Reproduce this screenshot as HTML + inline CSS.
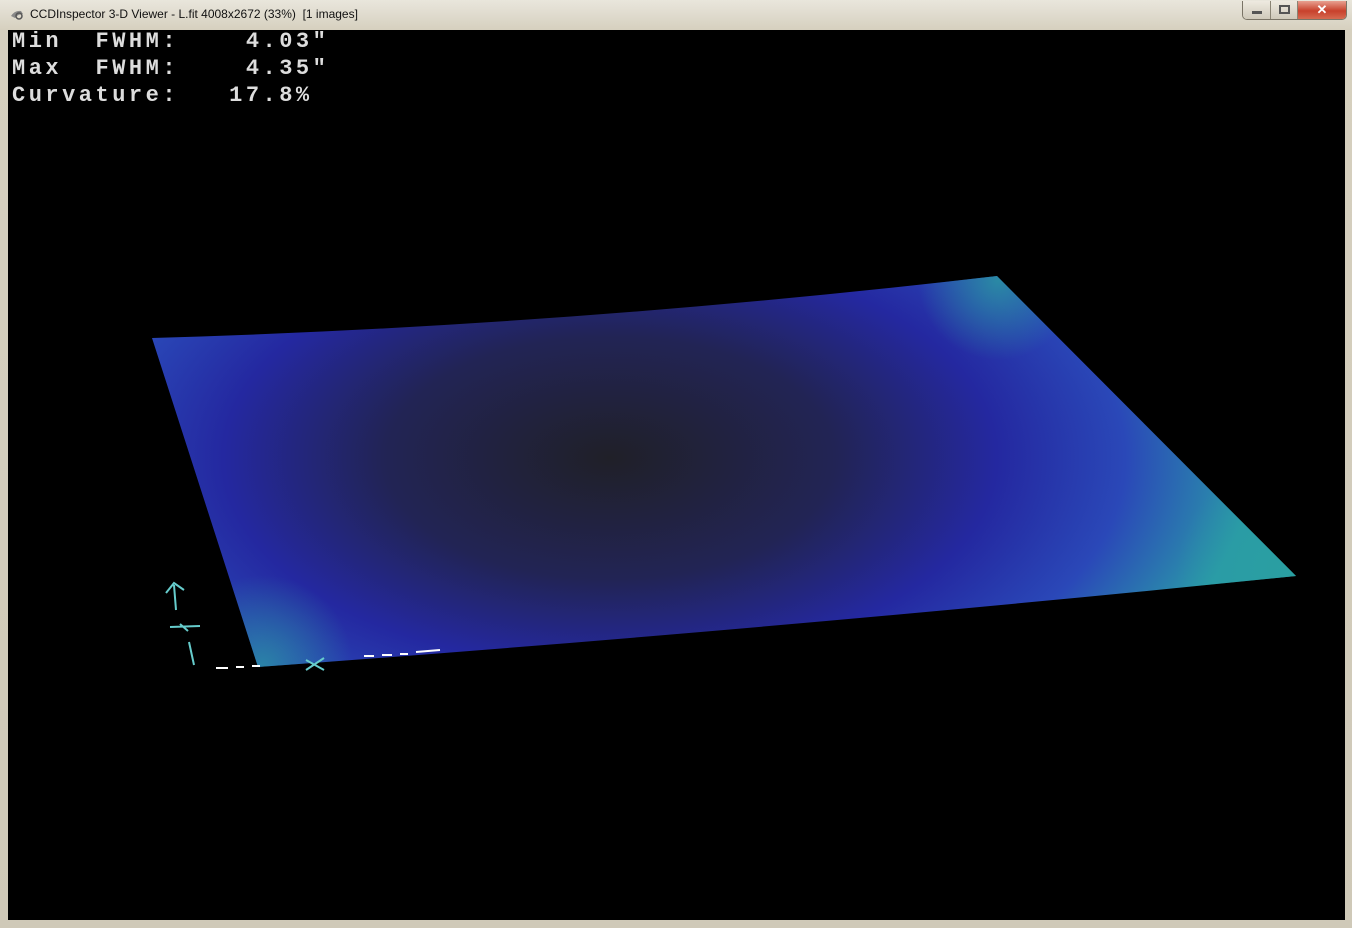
<!DOCTYPE html>
<html><head><style>
html,body{margin:0;padding:0;width:1352px;height:928px;overflow:hidden;background:#d9d4c4;}
.win{position:absolute;left:0;top:0;width:1352px;height:928px;background:linear-gradient(#e9e6dc,#d6d0bf 30px,#cfc9b8);}
.title{position:absolute;left:30px;top:7px;font:12px "Liberation Sans",sans-serif;color:#111;}
.client{position:absolute;left:8px;top:30px;width:1337px;height:890px;background:#000;overflow:hidden;}
.txt{position:absolute;left:4px;font:bold 22px "Liberation Mono",monospace;color:#ddd;letter-spacing:3.5px;white-space:pre;line-height:24px;}
.btns{position:absolute;left:1242px;top:1px;height:18px;width:103px;border:1px solid #7a7466;border-top:none;border-radius:0 0 5px 5px;overflow:hidden;display:flex;}
.btns div{height:18px;}
</style></head><body>
<div class="win">
<svg style="position:absolute;left:9px;top:8px" width="16" height="14"><path d="M2 8 Q6 2 12 3 L14 6 Q9 6 6 10 Z" fill="#888"/><circle cx="10" cy="8" r="3" fill="none" stroke="#555" stroke-width="1.5"/></svg>
<div class="title">CCDInspector 3-D Viewer - L.fit 4008x2672 (33%)&nbsp; [1 images]</div>
<div class="btns">
<div style="width:27px;background:linear-gradient(#eeeae0,#cfc9ba);border-right:1px solid #8a8474;position:relative"><span style="position:absolute;left:9px;top:10px;width:10px;height:3px;background:#555"></span></div>
<div style="width:26px;background:linear-gradient(#eeeae0,#cfc9ba);border-right:1px solid #8a8474;position:relative"><span style="position:absolute;left:8px;top:4px;width:7px;height:5px;border:2px solid #555"></span></div>
<div style="flex:1;background:linear-gradient(#e8a090,#c8412c 55%,#d66a50);color:#fff;font:bold 13px 'Liberation Sans',sans-serif;text-align:center;line-height:18px">✕</div>
</div>
<div class="client">
<svg width="1337" height="890" style="position:absolute;left:0;top:0">
<defs>
<radialGradient id="g" gradientUnits="userSpaceOnUse" cx="602" cy="428" r="560" gradientTransform="translate(602 428) scale(1.15 0.62) translate(-602 -428)">
<stop offset="0" stop-color="#202028"/>
<stop offset="0.35" stop-color="#222455"/>
<stop offset="0.6" stop-color="#2428a0"/>
<stop offset="0.8" stop-color="#2a48b8"/>
<stop offset="1" stop-color="#2a9aa8"/>
</radialGradient>
<radialGradient id="t1" gradientUnits="userSpaceOnUse" cx="1288" cy="546" r="120"><stop offset="0" stop-color="#2aa0a0" stop-opacity=".9"/><stop offset="1" stop-color="#2aa0a0" stop-opacity="0"/></radialGradient>
<radialGradient id="t2" gradientUnits="userSpaceOnUse" cx="990" cy="250" r="80"><stop offset="0" stop-color="#2a9aa0" stop-opacity=".8"/><stop offset="1" stop-color="#2a9aa0" stop-opacity="0"/></radialGradient>
<radialGradient id="t3" gradientUnits="userSpaceOnUse" cx="255" cy="635" r="90"><stop offset="0" stop-color="#2a9aa0" stop-opacity=".7"/><stop offset="1" stop-color="#2a9aa0" stop-opacity="0"/></radialGradient>
<clipPath id="c"><path id="p" d="M144 308 Q560 296 989 246 L1288 546 Q760 600 250 637 Z"/></clipPath>
</defs>
<g clip-path="url(#c)">
<rect width="1337" height="890" fill="url(#g)"/>
<rect width="1337" height="890" fill="url(#t1)"/>
<rect width="1337" height="890" fill="url(#t2)"/>
<rect width="1337" height="890" fill="url(#t3)"/>
</g>
<g stroke="#6cc" stroke-width="2" fill="none">
<path d="M158 563 L166 553 L176 560 M166 555 L168 580"/>
<path d="M162 597 L192 596 M172 594 L180 601"/>
<path d="M181 612 L186 635"/>
<path d="M298 630 L316 640 M298 640 L316 628"/>
</g>
<g stroke="#fff" stroke-width="2">
<path d="M208 638 L220 638 M228 637 L236 637 M244 636 L252 636"/>
<path d="M356 626 L366 626 M374 625 L384 625 M392 624 L400 624 M408 622 L432 620"/>
</g>
</svg>
<div class="txt" style="top:0px">Min  FWHM:    4.03"</div>
<div class="txt" style="top:27px">Max  FWHM:    4.35"</div>
<div class="txt" style="top:54px">Curvature:   17.8%</div>
</div>
</div>
</body></html>
